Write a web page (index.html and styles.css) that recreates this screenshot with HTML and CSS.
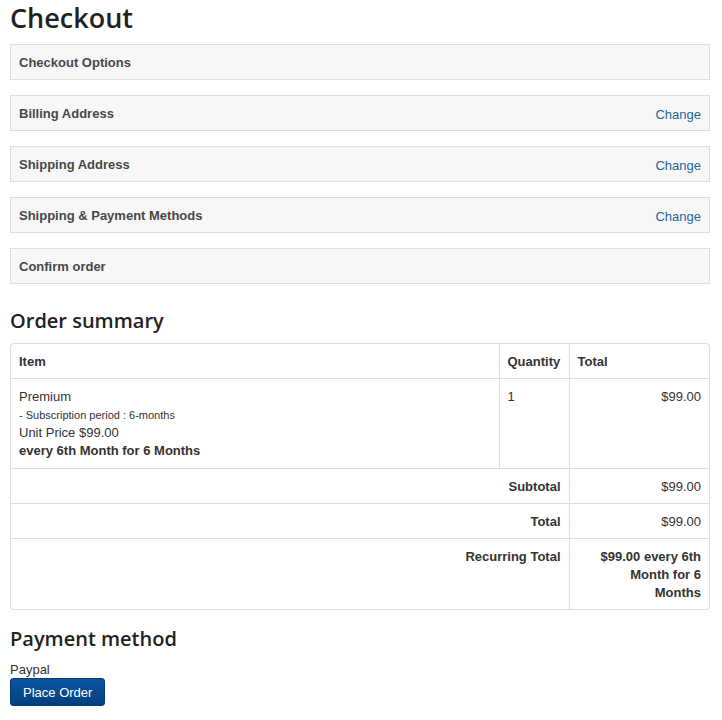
FILE: index.html
```html
<!DOCTYPE html>
<html>
<head>
<meta charset="utf-8">
<link rel="stylesheet" href="styles.css">
</head>
<body>
<div class="page">
  <h1 class="title">Checkout</h1>
  <div class="steps">
    <div class="panel"><span class="panel-title">Checkout Options</span></div>
    <div class="panel"><span class="panel-title">Billing Address</span><a class="change">Change</a></div>
    <div class="panel"><span class="panel-title">Shipping Address</span><a class="change">Change</a></div>
    <div class="panel"><span class="panel-title">Shipping &amp; Payment Methods</span><a class="change">Change</a></div>
    <div class="panel"><span class="panel-title">Confirm order</span></div>
  </div>
  <h2 class="section">Order summary</h2>
  <div class="table-wrap">
    <table class="summary">
      <colgroup><col class="c-item"><col class="c-qty"><col class="c-total"></colgroup>
      <thead>
        <tr><th>Item</th><th>Quantity</th><th>Total</th></tr>
      </thead>
      <tbody>
        <tr class="item-row">
          <td>
            <div>Premium</div>
            <div class="small">- Subscription period : 6-months</div>
            <div>Unit Price $99.00</div>
            <div class="bold">every 6th Month for 6 Months</div>
          </td>
          <td>1</td>
          <td class="right">$99.00</td>
        </tr>
      </tbody>
      <tfoot>
        <tr><td colspan="2" class="right bold">Subtotal</td><td class="right">$99.00</td></tr>
        <tr><td colspan="2" class="right bold">Total</td><td class="right">$99.00</td></tr>
        <tr><td colspan="2" class="right bold">Recurring Total</td><td class="right bold"><div class="recurring">$99.00 every 6th Month for 6 Months</div></td></tr>
      </tfoot>
    </table>
  </div>
  <h2 class="section pay">Payment method</h2>
  <div class="method">Paypal</div>
  <button class="btn">Place Order</button>
</div>
</body>
</html>
```
FILE: styles.css
```css
html, body {
  margin: 0;
  padding: 0;
  background: #fff;
}
body {
  font-family: "Liberation Sans", Arial, sans-serif;
  font-size: 13px;
  line-height: 18px;
  color: #333;
}
.page {
  padding: 0 12px 0 10px;
}
.title {
  font-family: "Open Sans", sans-serif;
  font-weight: 600;
  font-size: 27px;
  line-height: 36px;
  color: #222;
  margin: 0 0 8px 0;
  padding: 0;
}
.steps {
  display: flex;
  flex-direction: column;
  gap: 15px;
}
.panel {
  display: flex;
  align-items: center;
  justify-content: space-between;
  height: 34px;
  padding: 0 8px;
  background: #f7f7f7;
  border: 1px solid #dddddd;
}
.panel-title {
  font-weight: bold;
  color: #474747;
  padding-top: 2px;
}
.change {
  color: #1d6696;
  padding-top: 3px;
}
.section {
  font-family: "Open Sans", sans-serif;
  font-weight: 600;
  font-size: 20px;
  line-height: 28px;
  color: #222;
  margin: 23px 0 8px 0;
}
.table-wrap {
  border: 1px solid #ddd;
  border-radius: 4px;
  overflow: hidden;
}
.summary {
  width: 100%;
  border-collapse: collapse;
  table-layout: fixed;
}
.c-qty { width: 70px; }
.c-total { width: 140px; }
.summary th, .summary td {
  border: 1px solid #ddd;
  padding: 9px 8px 7px 8px;
  vertical-align: top;
  text-align: left;
}
.summary tr:first-child th { border-top: 0; }
.summary th:first-child, .summary td:first-child { border-left: 0; }
.summary th:last-child, .summary td:last-child { border-right: 0; }
.summary tfoot tr:last-child td { border-bottom: 0; padding-bottom: 7px; }
.summary th {
  font-weight: bold;
  height: 18px;
}
.summary td { height: 18px; }
.item-row td { padding-top: 9px; padding-bottom: 8px; }
.small {
  font-size: 11px;
}
.bold { font-weight: bold; }
.right { text-align: right !important; }
.recurring {
  max-width: 110px;
  margin-left: auto;
}
.pay { margin-top: 15px; margin-bottom: 9px; }
.method {
  line-height: 16px;
}
.btn {
  margin-top: 0;
  display: block;
  font-family: "Liberation Sans", Arial, sans-serif;
  font-size: 13px;
  color: #fff;
  background: linear-gradient(#0a56a0, #043e7e);
  border: 1px solid #033a75;
  border-radius: 3px;
  height: 28px;
  padding: 0 12px;
}
```
